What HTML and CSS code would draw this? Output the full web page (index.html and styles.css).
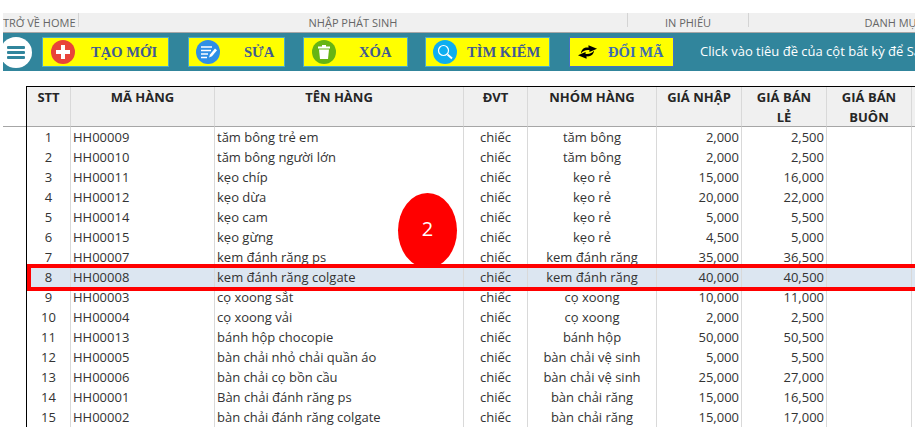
FILE: index.html
```html
<!DOCTYPE html>
<html lang="vi">
<head>
<meta charset="utf-8">
<title>Danh mục hàng hóa</title>
<link rel="stylesheet" href="styles.css">
</head>
<body>
<div class="page">
  <nav class="tabs">
    <div class="tab tab-home">TRỞ VỀ HOME</div>
    <div class="tab tab-entry">NHẬP PHÁT SINH</div>
    <div class="tab tab-print">IN PHIẾU</div>
    <div class="tab tab-list">DANH MỤC</div>
  </nav>
  <div class="toolbar">
    <div class="menu-btn"><span></span><span></span><span></span></div>
    <div class="btn btn-new">
      <svg class="ico" viewBox="0 0 24 24"><circle cx="12" cy="12" r="12" fill="#e8443a"/><path d="M12 5v14M5 12h14" stroke="#fff" stroke-width="4"/></svg>
      <span class="btn-label">TẠO MỚI</span>
    </div>
    <div class="btn btn-edit">
      <svg class="ico" viewBox="0 0 24 24"><circle cx="12" cy="12" r="12" fill="#2f8fe6"/><path d="M5 7h11M5 10.500h10M5 14h7M5 17.500h6" stroke="#fff" stroke-width="1.700"/><path d="M13 17.500l1-3 5-6 2 1.800-5 6z" fill="#fff"/></svg>
      <span class="btn-label">SỬA</span>
    </div>
    <div class="btn btn-del">
      <svg class="ico" viewBox="0 0 24 24"><circle cx="12" cy="12" r="12" fill="#66b414"/><path d="M6 6.500h12v2H6zM10 5h4v1.500h-4z" fill="#fff"/><path d="M7 9.500h10l-1 9.500H8z" fill="#fff"/></svg>
      <span class="btn-label">XÓA</span>
    </div>
    <div class="btn btn-find">
      <svg class="ico" viewBox="0 0 24 24"><circle cx="12" cy="12" r="12" fill="#0eaef0"/><circle cx="10.500" cy="10.500" r="5" fill="none" stroke="#fff" stroke-width="1.200"/><path d="M14.500 14.500l4.500 4" stroke="#fff" stroke-width="2"/></svg>
      <span class="btn-label">TÌM KIẾM</span>
    </div>
    <div class="btn btn-code">
      <svg class="ico-swap" viewBox="0 0 22 14"><path d="M4 8.500C5 3.500 8 2 12 2.500V0l9 3.500-8 3.500V5C9 4.500 6 6 4 8.500z" fill="#000"/><path d="M4 8.500C5 3.500 8 2 12 2.500V0l9 3.500-8 3.500V5C9 4.500 6 6 4 8.500z" fill="#000" transform="rotate(180 11 7)"/></svg>
      <span class="btn-label">ĐỔI MÃ</span>
    </div>
    <div class="hint">Click vào tiêu đề của cột bất kỳ để Sắp xếp</div>
  </div>
  <div class="sheet">
    <table class="grid">
      <colgroup>
        <col class="c-stt"><col class="c-code"><col class="c-name"><col class="c-unit"><col class="c-group"><col class="c-in"><col class="c-out"><col class="c-whole"><col class="c-rest">
      </colgroup>
      <thead>
        <tr><th><div class="hd">STT</div></th><th><div class="hd">MÃ HÀNG</div></th><th><div class="hd">TÊN HÀNG</div></th><th><div class="hd">ĐVT</div></th><th><div class="hd">NHÓM HÀNG</div></th><th><div class="hd">GIÁ NHẬP</div></th><th><div class="hd">GIÁ BÁN<br>LẺ</div></th><th><div class="hd">GIÁ BÁN<br>BUÔN</div></th><th><div class="hd"></div></th></tr>
      </thead>
      <tbody>
        <tr><td class="ctr">1</td><td>HH00009</td><td>tăm bông trẻ em</td><td class="ctr">chiếc</td><td class="ctr">tăm bông</td><td class="num">2,000</td><td class="num">2,500</td><td></td><td></td></tr>
        <tr><td class="ctr">2</td><td>HH00010</td><td>tăm bông người lớn</td><td class="ctr">chiếc</td><td class="ctr">tăm bông</td><td class="num">2,000</td><td class="num">2,500</td><td></td><td></td></tr>
        <tr><td class="ctr">3</td><td>HH00011</td><td>kẹo chíp</td><td class="ctr">chiếc</td><td class="ctr">kẹo rẻ</td><td class="num">15,000</td><td class="num">16,000</td><td></td><td></td></tr>
        <tr><td class="ctr">4</td><td>HH00012</td><td>kẹo dừa</td><td class="ctr">chiếc</td><td class="ctr">kẹo rẻ</td><td class="num">20,000</td><td class="num">22,000</td><td></td><td></td></tr>
        <tr><td class="ctr">5</td><td>HH00014</td><td>kẹo cam</td><td class="ctr">chiếc</td><td class="ctr">kẹo rẻ</td><td class="num">5,000</td><td class="num">5,500</td><td></td><td></td></tr>
        <tr><td class="ctr">6</td><td>HH00015</td><td>kẹo gừng</td><td class="ctr">chiếc</td><td class="ctr">kẹo rẻ</td><td class="num">4,500</td><td class="num">5,000</td><td></td><td></td></tr>
        <tr><td class="ctr">7</td><td>HH00007</td><td>kem đánh răng ps</td><td class="ctr">chiếc</td><td class="ctr">kem đánh răng</td><td class="num">35,000</td><td class="num">36,500</td><td></td><td></td></tr>
        <tr class="selected"><td class="ctr">8</td><td>HH00008</td><td>kem đánh răng colgate</td><td class="ctr">chiếc</td><td class="ctr">kem đánh răng</td><td class="num">40,000</td><td class="num">40,500</td><td></td><td></td></tr>
        <tr><td class="ctr">9</td><td>HH00003</td><td>cọ xoong sắt</td><td class="ctr">chiếc</td><td class="ctr">cọ xoong</td><td class="num">10,000</td><td class="num">11,000</td><td></td><td></td></tr>
        <tr><td class="ctr">10</td><td>HH00004</td><td>cọ xoong vải</td><td class="ctr">chiếc</td><td class="ctr">cọ xoong</td><td class="num">2,000</td><td class="num">2,500</td><td></td><td></td></tr>
        <tr><td class="ctr">11</td><td>HH00013</td><td>bánh hộp chocopie</td><td class="ctr">chiếc</td><td class="ctr">bánh hộp</td><td class="num">50,000</td><td class="num">50,500</td><td></td><td></td></tr>
        <tr><td class="ctr">12</td><td>HH00005</td><td>bàn chải nhỏ chải quần áo</td><td class="ctr">chiếc</td><td class="ctr">bàn chải vệ sinh</td><td class="num">5,000</td><td class="num">5,500</td><td></td><td></td></tr>
        <tr><td class="ctr">13</td><td>HH00006</td><td>bàn chải cọ bồn cầu</td><td class="ctr">chiếc</td><td class="ctr">bàn chải vệ sinh</td><td class="num">25,000</td><td class="num">27,000</td><td></td><td></td></tr>
        <tr><td class="ctr">14</td><td>HH00001</td><td>Bàn chải đánh răng ps</td><td class="ctr">chiếc</td><td class="ctr">bàn chải răng</td><td class="num">15,000</td><td class="num">16,500</td><td></td><td></td></tr>
        <tr><td class="ctr">15</td><td>HH00002</td><td>bàn chải đánh răng colgate</td><td class="ctr">chiếc</td><td class="ctr">bàn chải răng</td><td class="num">15,000</td><td class="num">17,000</td><td></td><td></td></tr>
      </tbody>
    </table>
    <div class="highlight"></div>
    <div class="badge">2</div>
  </div>
</div>
</body>
</html>
```
FILE: styles.css
```css
html, body { margin: 0; padding: 0; background: #fff; overflow: hidden; }
body { width: 915px; height: 435px; font-family: "Open Sans", "Noto Sans", sans-serif; color: #333; }
.page { padding: 13px 0 0 3px; display: flex; flex-direction: column; }

.tabs { display: flex; height: 19px; background: #f0f0f0; border-bottom: 1px solid #a6a6a6; font-size: 11px; color: #666; overflow: hidden; }
.tab { flex: none; height: 14px; line-height: 20px; text-align: center; border-right: 1px solid #d4d4d4; white-space: nowrap; }
.tab-home { width: 75px; text-align: left; }
.tab-entry { width: 548px; }
.tab-print { width: 120px; }
.tab-list { width: 290px; border-right: 0; }

.toolbar { display: flex; align-items: center; height: 38px; background: #31859c; overflow: hidden; white-space: nowrap; }
.menu-btn { flex: none; width: 32px; height: 31px; margin-left: -3px; margin-right: 10px; background: #fff; border-radius: 50%; display: flex; flex-direction: column; justify-content: center; align-items: center; gap: 2px; }
.menu-btn span { display: block; width: 18px; height: 3px; background: #31859c; border-radius: 1px; }
.btn { flex: none; box-sizing: border-box; height: 30px; display: flex; align-items: center; background: #ff0; border: 1px solid #4bacc6; font-family: "Liberation Serif", serif; font-weight: 700; font-size: 14.6px; color: #3f5a94; }
.ico { flex: none; width: 24px; height: 24px; }
.btn-new { width: 127px; margin-right: 19px; padding-left: 8px; }
.btn-new .btn-label { margin-left: 16px; }
.btn-edit { width: 97px; margin-right: 18px; padding-left: 7px; }
.btn-edit .btn-label { margin-left: 24px; }
.btn-del { width: 105px; margin-right: 17px; padding-left: 8px; }
.btn-del .btn-label { margin-left: 23px; }
.btn-find { width: 125px; margin-right: 19px; padding-left: 7px; }
.btn-find .btn-label { margin-left: 10px; }
.btn-code { width: 105px; padding-left: 7px; border-color: #4472c4; color: #3d6cb5; }
.ico-swap { flex: none; width: 21px; height: 14px; }
.btn-code .btn-label { margin-left: 10px; }
.hint { flex: none; margin-left: 26px; padding-bottom: 2px; font-size: 13px; color: #fff; }

.sheet { position: relative; margin-top: 15px; height: 344px; }
.sheet::before { content: ""; position: absolute; left: 0; right: 0; top: 40px; height: 1px; background: #a6a6a6; }
.grid { position: relative; margin-left: 23px; width: 890px; table-layout: fixed; border-collapse: separate; border-spacing: 0; border-top: 1px solid #000; border-left: 1px solid #000; font-size: 13px; }
.c-stt { width: 44px; } .c-code { width: 144px; } .c-name { width: 249px; } .c-unit { width: 64px; }
.c-group { width: 129px; } .c-in { width: 85px; } .c-out { width: 85px; } .c-whole { width: 85px; } .c-rest { width: 4px; }
th { padding: 0; vertical-align: top; font-size: 13px; font-weight: 700; text-align: center; background: #f0f0f0; border-right: 1px solid #d9d9d9; border-bottom: 1px solid #a6a6a6; color: #262626; white-space: nowrap; }
.hd { height: 39px; line-height: 20px; }
td { height: 20px; padding: 0 2px; line-height: 20px; white-space: nowrap; overflow: hidden; border-right: 1px solid #d9d9d9; box-sizing: border-box; }
th:last-child, td:last-child { border-right: 0; padding: 0; }
.ctr { text-align: center; }
.num { text-align: right; }
.selected td { background: #dce6f1; }

.highlight { position: absolute; left: 24px; top: 178px; width: 900px; height: 27px; box-sizing: border-box; border: 4px solid #f00; }
.badge { position: absolute; left: 395px; top: 107px; width: 59px; height: 75px; border-radius: 50%; background: #f00; color: #fff; font-size: 20px; line-height: 72px; text-align: center; }
```
